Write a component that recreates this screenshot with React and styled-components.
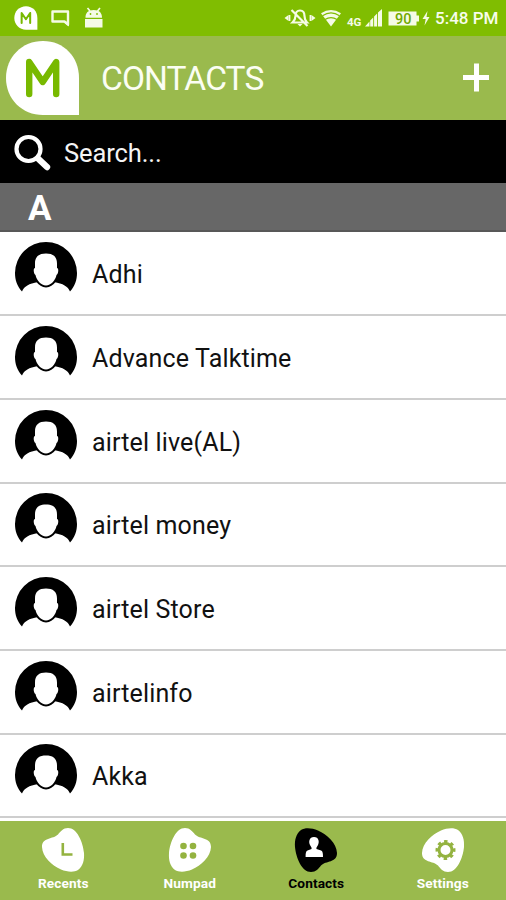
import React from "react";
import styled, { createGlobalStyle } from "styled-components";

const GlobalStyle = createGlobalStyle`
  * { box-sizing: border-box; }
  html, body { margin: 0; background: #fff; overflow: hidden; }
  body { font-family: Roboto, "Open Sans", sans-serif; }
  svg { display: block; flex: none; }
`;

const Screen = styled.div`
  width: 506px;
  height: 900px;
  display: flex;
  flex-direction: column;
  overflow: hidden;
  background: #fff;
`;

const StatusBar = styled.div`
  flex: none;
  height: 36px;
  background: #80bd01;
  color: #f8fdec;
  display: flex;
  justify-content: space-between;
  padding: 0 8px 0 14px;
`;

const StatusGroup = styled.div`
  display: flex;
  align-items: center;
`;

const StatusLeft = styled(StatusGroup)`
  gap: 13px;
`;

const Clock = styled.span`
  width: 63px;
  margin-left: 4px;
  font-size: 17px;
  line-height: 36px;
  font-weight: 500;
  white-space: nowrap;
`;

const Header = styled.header`
  flex: none;
  height: 84px;
  background: #9aba4d;
  display: flex;
  align-items: center;
  padding: 0 16px 0 5px;
`;

const Title = styled.h1`
  flex: 1;
  margin: 1px 0 0 20px;
  font-size: 33.5px;
  line-height: 40px;
  font-weight: 400;
  letter-spacing: -0.9px;
  color: #fbfef3;
`;

const SearchBar = styled.div`
  flex: none;
  height: 63px;
  background: #000;
  color: #f4f4f4;
  display: flex;
  align-items: center;
  padding: 2px 14px 0;
  gap: 12px;
  font-size: 25.5px;
  letter-spacing: -0.1px;
`;

const SectionHeader = styled.div`
  flex: none;
  height: 48.5px;
  background: #676767;
  border-bottom: 2px solid #585858;
  color: #fff;
  padding: 2px 0 0 28px;
  font-size: 35px;
  line-height: 47px;
  font-weight: 700;
`;

const ContactList = styled.ul`
  flex: none;
  height: 589.5px;
  list-style: none;
  margin: 0;
  padding: 1.3px 0 0;
`;

const ContactRow = styled.li`
  height: 83.65px;
  border-bottom: 2px solid #cecece;
  display: flex;
  align-items: flex-start;
  padding: 8.5px 0 0 14px;
`;

const ContactName = styled.span`
  margin: 17px 0 0 14px;
  font-size: 25px;
  line-height: 34px;
  letter-spacing: 0.15px;
  color: #111;
  white-space: nowrap;
`;

const TabBar = styled.nav`
  flex: none;
  height: 79px;
  background: #9aba4d;
  display: grid;
  grid-template-columns: repeat(4, 1fr);
`;

const Tab = styled.div`
  display: flex;
  flex-direction: column;
  align-items: center;
  padding-top: 6px;
  color: ${(p) => (p.$active ? "#000" : "#fff")};
`;

const TabLabel = styled.span`
  margin-top: 1px;
  font-size: 13.7px;
  line-height: 18px;
  font-weight: 700;
  letter-spacing: 0.1px;
`;

function MarkLogo({ size }) {
  return (
    <svg width={size} height={size} viewBox="0 0 76 76">
      <path d="M38 1C17 1 1 17 1 38s16 37 37 37h36V38C74 17 59 1 38 1z" fill="#fff" />
      <path d="M24.200 54V22L37.700 42L51.200 22V54" fill="none" stroke="#78b900" strokeWidth="6.400" strokeLinecap="round" strokeLinejoin="round" />
    </svg>
  );
}

function StatusIcons() {
  return (
    <svg width="147" height="36" viewBox="284 0 147 36" fill="#f5fbe6">
      <path d="M284.500 18l4-3v6zM315.500 18l-4-3v6z" />
      <path d="M289.500 15v6M310.500 15v6" stroke="#f5fbe6" strokeWidth="1.800" />
      <path d="M292.500 22.500h14.500c-2-2-2.500-4-2.500-6.500c0-4-2-5.500-4.500-5.500S295.500 12 295.500 16c0 3-1 4.500-3 6.500zM291.500 10l16 16" fill="none" stroke="#f5fbe6" strokeWidth="2.200" />
      <path d="M297.500 24h5l-2.500 2.500z" />
      <path d="M321 13.200q10-6.500 20 0L331 26.500z" />
      <path d="M322.500 15.700q8.500-5.500 17 0M325 19.600q6-4 12 0" fill="none" stroke="#80bd01" strokeWidth="1.200" />
      <text x="347" y="26" fontFamily="Roboto, sans-serif" fontSize="11.500" fontWeight="700">4G</text>
      <path d="M365 26.500l4.500-5v5zM370.200 20.500l3-3v9h-3zM374.100 16.500l3-3v13h-3zM378 12.500l4-3.500v17.500h-4z" />
      <path d="M388.500 11.500h28v4h2.500v6h-2.500v4h-28z" />
      <text x="395" y="23.700" fontFamily="Roboto, sans-serif" fontSize="14.500" fontWeight="500" fill="#71a900">90</text>
      <path d="M427.500 11l-5 8h3.200l-1.200 6.500 5-8.500h-3z" />
    </svg>
  );
}

function MessageIcon() {
  return (
    <svg width="20" height="18" viewBox="0 0 20 18">
      <path d="M1.500 2.500h15.500v13l-3.500-3h-12z" fill="none" stroke="#f5fbe6" strokeWidth="2.400" strokeLinejoin="round" />
      <path d="M12.500 13h5.500v4.500z" fill="#f5fbe6" />
    </svg>
  );
}

function AndroidIcon() {
  return (
    <svg width="20" height="22" viewBox="0 0 20 22">
      <path d="M3.500 1L6 4M16 1L13.500 4" stroke="#f5fbe6" strokeWidth="1.700" />
      <path d="M1.500 10.800C1.500 6 4 3 9.750 3S18 6 18 10.800zM1 12h17.500v8.500H1z" fill="#f5fbe6" />
      <circle cx="6.500" cy="7" r="0.900" fill="#80bd01" />
      <circle cx="13" cy="7" r="0.900" fill="#80bd01" />
    </svg>
  );
}

function PlusIcon() {
  return (
    <svg width="28" height="30" viewBox="0 0 28 30">
      <path d="M14.500 0.500v28M1 14.500h26" stroke="#fff" strokeWidth="5" />
    </svg>
  );
}

function SearchIcon() {
  return (
    <svg width="38" height="38" viewBox="0 0 38 38" fill="none" stroke="#fff">
      <circle cx="14.500" cy="15" r="12" strokeWidth="4.200" />
      <path d="M24 24.500l9 8.500" strokeWidth="6.400" strokeLinecap="round" />
    </svg>
  );
}

function Avatar() {
  return (
    <svg width="64" height="52" viewBox="0 0 64 52">
      <path d="M8 50.500C3 45 1 39 1 32a31 31 0 0 1 62 0c0 7-2 13-7 18.500c-2-5-7-8-16-9.500H24c-9 1.500-14 4.500-16 9.500z" fill="#000" />
      <path d="M22 40.500C25 44 28 46.500 32 46.500s7-2.500 10-6z" fill="#000" />
      <path d="M32 12.500c-7 0-11 3-11 10v4.500c-2 0-1.500 6 .5 7c1 5 5.500 10.500 10.500 10.500s9.500-5.500 10.500-10.500c2-1 2.500-7 .5-7v-4.500c0-7-4-10-11-10z" fill="#fff" />
    </svg>
  );
}

const BLOB = "M27 1C22 1 19.500 4.500 17 7.500C12 12.500 1 10 1 20C1.500 30 11 38.500 20 42.500C26 45 33 45.500 37 43C42 39 43.500 33 43 26C42 15 36 1 27 1z";

const TRANSFORMS = {
  recents: undefined,
  numpad: "translate(44 0) scale(-1 1)",
  contacts: "translate(44 46) scale(-1 -1)",
  settings: "translate(0 46) scale(1 -1)",
};

function TabIcon({ kind }) {
  return (
    <svg width="44" height="46" viewBox="0 0 44 46">
      <path d={BLOB} transform={TRANSFORMS[kind]} fill="currentColor" />
      {kind === "recents" && (
        <path d="M21.800 16v11.500h9.700" fill="none" stroke="#94b340" strokeWidth="2.600" />
      )}
      {kind === "numpad" && (
        <g fill="#94b340">
          <circle cx="15.500" cy="19" r="3.300" />
          <circle cx="25" cy="19" r="3.300" />
          <circle cx="15.500" cy="28.500" r="3.300" />
          <circle cx="25" cy="28.500" r="3.300" />
        </g>
      )}
      {kind === "contacts" && (
        <path d="M20 10c-5 0-5.500 5-4 8c1 2 2 2.500 1.500 4L13.500 23.500c-1.700.7-1.900 3-1.900 6.500h17.400c0-3.500-.2-5.800-1.900-6.500L22.500 22c-.5-1.500.5-2 1.500-4c1.500-3 1-8-4-8z" fill="#fff" />
      )}
      {kind === "settings" && (
        <g transform="translate(24.500 23)" fill="none" stroke="#94b340">
          <circle r="6.500" strokeWidth="3" />
          <circle r="8.500" strokeWidth="3" strokeDasharray="3.338 3.338" transform="rotate(-11.250)" />
        </g>
      )}
    </svg>
  );
}

const CONTACTS = [
  "Adhi",
  "Advance Talktime",
  "airtel live(AL)",
  "airtel money",
  "airtel Store",
  "airtelinfo",
  "Akka",
];

const TABS = [
  ["recents", "Recents"],
  ["numpad", "Numpad"],
  ["contacts", "Contacts"],
  ["settings", "Settings"],
];

export default function App() {
  return (
    <>
      <GlobalStyle />
      <Screen>
        <StatusBar>
          <StatusLeft>
            <MarkLogo size={24} />
            <MessageIcon />
            <AndroidIcon />
          </StatusLeft>
          <StatusGroup>
            <StatusIcons />
            <Clock>5:48 PM</Clock>
          </StatusGroup>
        </StatusBar>
        <Header>
          <MarkLogo size={76} />
          <Title>CONTACTS</Title>
          <PlusIcon />
        </Header>
        <SearchBar>
          <SearchIcon />
          <span>Search...</span>
        </SearchBar>
        <SectionHeader>A</SectionHeader>
        <ContactList>
          {CONTACTS.map((name) => (
            <ContactRow key={name}>
              <Avatar />
              <ContactName>{name}</ContactName>
            </ContactRow>
          ))}
        </ContactList>
        <TabBar>
          {TABS.map(([kind, label]) => (
            <Tab key={kind} $active={kind === "contacts"}>
              <TabIcon kind={kind} />
              <TabLabel>{label}</TabLabel>
            </Tab>
          ))}
        </TabBar>
      </Screen>
    </>
  );
}
